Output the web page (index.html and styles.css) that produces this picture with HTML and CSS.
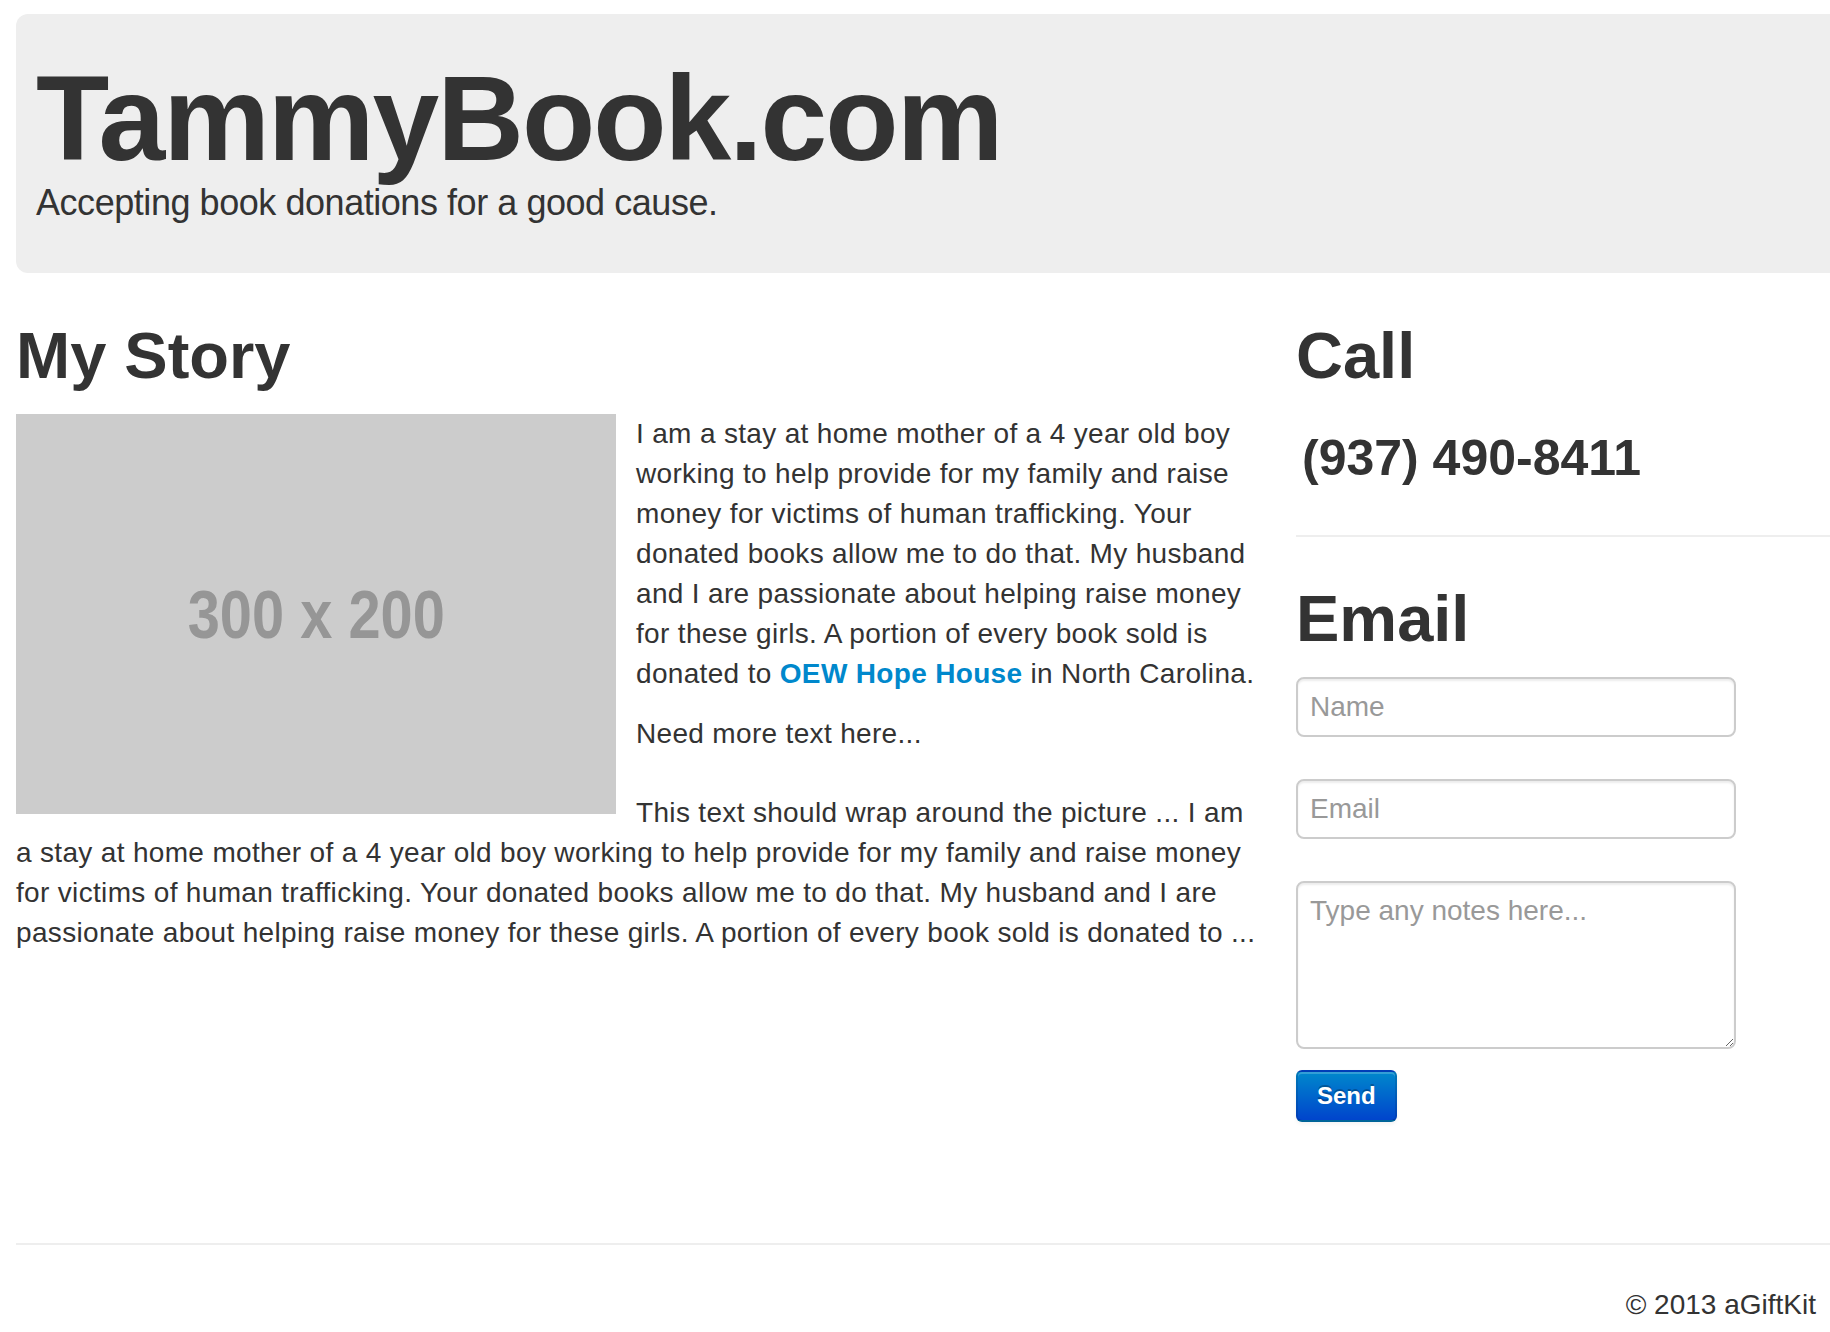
FILE: index.html
```html
<!DOCTYPE html>
<html lang="en">
<head>
  <meta charset="UTF-8" />
  <meta name="viewport" content="width=device-width, initial-scale=1.0" />
  <title>TammyBook.com</title>
  <link rel="stylesheet" href="styles.css">
</head>
<body>
  <div class="page">
    <!-- Hero -->
    <header class="hero">
      <h1 class="hero-title">TammyBook.com</h1>
      <p class="hero-tagline">Accepting book donations for a good cause.</p>
    </header>

    <div class="row">
      <!-- Story -->
      <section class="story">
        <h2>My Story</h2>
        <div class="placeholder"><span>300 x 200</span></div>
        <p>I am a stay at home mother of a 4 year old boy working to help provide for my family and raise money for victims of human trafficking. Your donated books allow me to do that. My husband and I are passionate about helping raise money for these girls. A portion of every book sold is donated to <a href="#">OEW Hope House</a> in North Carolina.</p>
        <p>Need more text here...</p>
        <p class="wrap-note">This text should wrap around the picture ... I am a stay at home mother of a 4 year old boy working to help provide for my family and raise money for victims of human trafficking. Your donated books allow me to do that. My husband and I are passionate about helping raise money for these girls. A portion of every book sold is donated to ...</p>
      </section>

      <!-- Contact -->
      <aside class="contact">
        <h2>Call</h2>
        <h3 class="phone">(937) 490-8411</h3>
        <hr>
        <h2>Email</h2>
        <form class="email-form">
          <input type="text" placeholder="Name">
          <input type="text" placeholder="Email">
          <textarea placeholder="Type any notes here..."></textarea>
          <button type="button" class="btn-send">Send</button>
        </form>
      </aside>
    </div>

    <!-- Footer -->
    <footer class="footer">
      <hr>
      <p>&copy; 2013 aGiftKit</p>
    </footer>
  </div>
</body>
</html>
```

FILE: styles.css
```css
body {
  margin: 0;
  background: #fff;
  color: #333;
  font-family: "Liberation Sans", Arial, Helvetica, sans-serif;
  font-size: 28px;
  line-height: 40px;
}
.page {
  padding: 14px 0 0 16px;
}

/* Hero */
.hero {
  background: #eee;
  border-radius: 12px 0 0 12px;
  padding: 44px 20px 45px;
  margin-bottom: 23px;
}
.hero-title {
  margin: 0;
  font-size: 120px;
  line-height: 120px;
  font-weight: bold;
  letter-spacing: -2px;
}
.hero-tagline {
  margin: 0;
  font-size: 36px;
  line-height: 50px;
  letter-spacing: -0.45px;
}

/* Layout */
.row {
  display: flex;
  gap: 34px;
}
.story {
  flex: none;
  width: 1246px;
}
.contact {
  flex: 1;
}
h2 {
  margin: 20px 0 18px;
  font-size: 65px;
  line-height: 80px;
  font-weight: bold;
}

/* Story */
.placeholder {
  float: left;
  width: 600px;
  height: 400px;
  margin: 0 20px 10px 0;
  background: #ccc;
  display: flex;
  align-items: center;
  justify-content: center;
}
.placeholder span {
  color: #969696;
  font-size: 68px;
  font-weight: bold;
  transform: scaleX(0.85);
}
.story p {
  margin: 0 0 20px;
  letter-spacing: 0.33px;
}
.story p.wrap-note {
  margin-top: 39px;
}
.story a {
  color: #0088cc;
  font-weight: bold;
  text-decoration: none;
}

/* Contact */
.phone {
  margin: 22px 0 20px;
  padding-left: 6px;
  font-size: 50px;
  line-height: 80px;
  font-weight: bold;
}
.contact hr {
  height: 0;
  margin: 37px 0 40px;
  border: 0;
  border-top: 2px solid #eee;
  border-bottom: 2px solid #fff;
}
.email-form input,
.email-form textarea {
  display: block;
  box-sizing: border-box;
  width: 440px;
  font-family: inherit;
  font-size: 28px;
  color: #555;
  background: #fff;
  border: 2px solid #ccc;
  border-radius: 8px;
  box-shadow: inset 0 2px 2px rgba(0, 0, 0, 0.075);
  outline: none;
}
.email-form input {
  height: 60px;
  padding: 0 12px;
  margin: 0 0 42px;
}
.email-form textarea {
  height: 168px;
  padding: 8px 12px;
  line-height: 40px;
  margin: 0 0 21px;
}
.email-form ::placeholder {
  color: #999;
}
.btn-send {
  display: block;
  padding: 4px 19px;
  font-family: inherit;
  font-size: 24px;
  line-height: 40px;
  font-weight: bold;
  color: #fff;
  text-shadow: 0 -2px 0 rgba(0, 0, 0, 0.25);
  background-color: #0055cc;
  background-image: linear-gradient(to bottom, #0088cc, #0044cc);
  border: 2px solid #0044aa;
  border-color: rgba(0, 0, 0, 0.1) rgba(0, 0, 0, 0.1) rgba(0, 0, 0, 0.25);
  border-radius: 6px;
  box-shadow: inset 0 2px 0 rgba(255, 255, 255, 0.2), 0 2px 4px rgba(0, 0, 0, 0.05);
  cursor: pointer;
}

/* Footer */
.footer hr {
  height: 0;
  margin: 121px 0 40px;
  border: 0;
  border-top: 2px solid #eee;
}
.footer p {
  margin: 0;
  padding-right: 14px;
  text-align: right;
}
```
